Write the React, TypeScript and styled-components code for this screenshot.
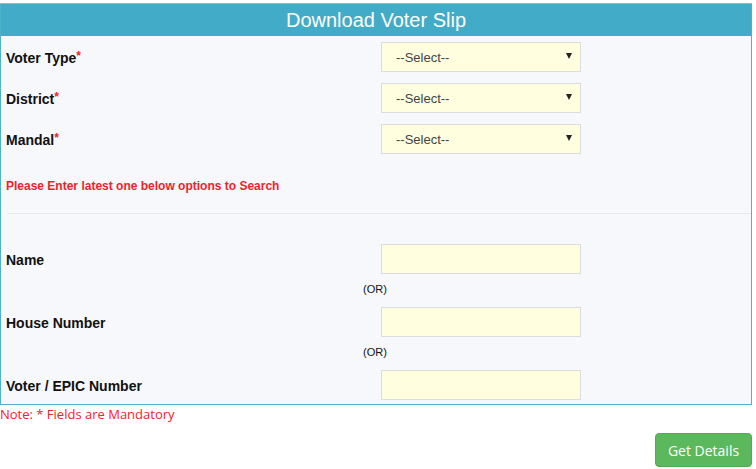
import React from "react";
import styled, { createGlobalStyle } from "styled-components";

const Global = createGlobalStyle`
  html, body { margin: 0; padding: 0; background: #fff; }
  body { font-family: "Liberation Sans", Arial, sans-serif; }
`;

const Page = styled.div`
  padding-top: 3px;
  width: 752px;
`;

const Panel = styled.div`
  border: 1px solid #4cb3c9;
  border-top-color: #9fb4bb;
  background: #f7f8fc;
`;

const Header = styled.div`
  height: 32px;
  background: #42abc8;
  color: #fff;
  font-size: 20px;
  line-height: 32px;
  text-align: center;
`;

const Section = styled.div<{ $pt: number; $pb: number }>`
  display: flex;
  flex-direction: column;
  padding: ${(p) => p.$pt}px 0 ${(p) => p.$pb}px;
`;

const Row = styled.div<{ $gap?: number }>`
  display: flex;
  align-items: center;
  height: 30px;
  margin-bottom: ${(p) => p.$gap ?? 0}px;
`;

const Label = styled.div`
  width: 375px;
  padding-left: 5px;
  padding-top: 1px;
  font-size: 14px;
  font-weight: bold;
  color: #111;
`;

const Req = styled.span`
  color: #f0212b;
  font-size: 12px;
  font-weight: bold;
  vertical-align: 3px;
`;

const SelectBox = styled.div`
  box-sizing: border-box;
  width: 200px;
  height: 30px;
  border: 1px solid #dcdcdc;
  background: #ffffe0;
  display: flex;
  align-items: center;
  justify-content: space-between;
  padding: 0 8px 0 14px;
  font-size: 13px;
  color: #444;
`;

const Arrow = styled.span`
  width: 0;
  height: 0;
  border-left: 3.5px solid transparent;
  border-right: 3.5px solid transparent;
  border-top: 6px solid #222;
  margin-top: -2px;
`;

const Input = styled.div`
  width: 200px;
  height: 30px;
  box-sizing: border-box;
  border: 1px solid #dcdcdc;
  background: #ffffe0;
`;

const Message = styled.div`
  margin-top: 25px;
  padding-left: 5px;
  font-size: 12px;
  font-weight: bold;
  line-height: 14px;
  color: #f0212b;
`;

const Divider = styled.div`
  margin: 20px 0 0 6px;
  height: 1px;
  background: #e6e8ee;
`;

const Or = styled.div`
  height: 33px;
  line-height: 31px;
  padding-left: 362px;
  font-size: 11px;
  color: #111;
`;

const Note = styled.div`
  margin-top: 1px;
  font-family: "Open Sans", sans-serif;
  font-size: 13px;
  line-height: 17px;
  color: #f0212b;
`;

const Footer = styled.div`
  display: flex;
  justify-content: flex-end;
  margin-top: 10px;
`;

const Button = styled.button`
  width: 97px;
  height: 34px;
  border: 1px solid #4cae4c;
  border-radius: 4px;
  background: #5cb85c;
  color: #fff;
  font-family: "Open Sans", sans-serif;
  font-size: 14px;
  padding: 0;
`;

const selects = ["Voter Type", "District", "Mandal"];
const inputs = ["Name", "House Number", "Voter / EPIC Number"];

export default function App() {
  return (
    <Page>
      <Global />
      <Panel>
        <Header>Download Voter Slip</Header>
        <Section $pt={6} $pb={0}>
          {selects.map((s, i) => (
            <Row key={s} $gap={i < selects.length - 1 ? 11 : 0}>
              <Label>
                {s}
                <Req>*</Req>
              </Label>
              <SelectBox>
                <span>--Select--</span>
                <Arrow />
              </SelectBox>
            </Row>
          ))}
          <Message>Please Enter latest one below options to Search</Message>
          <Divider />
        </Section>
        <Section $pt={30} $pb={4}>
          {inputs.map((s, i) => (
            <React.Fragment key={s}>
              <Row>
                <Label>{s}</Label>
                <Input />
              </Row>
              {i < inputs.length - 1 && <Or>(OR)</Or>}
            </React.Fragment>
          ))}
        </Section>
      </Panel>
      <Note>Note: * Fields are Mandatory</Note>
      <Footer>
        <Button>Get Details</Button>
      </Footer>
    </Page>
  );
}
